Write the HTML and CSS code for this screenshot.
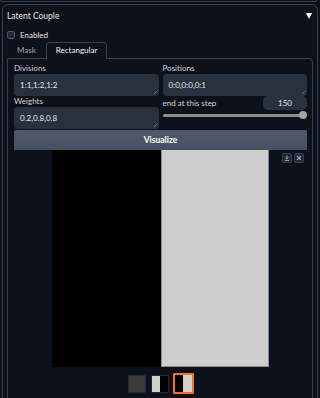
FILE: index.html
```html
<!DOCTYPE html>
<html lang="en">
<head>
  <meta charset="UTF-8" />
  <meta name="viewport" content="width=device-width, initial-scale=1.0" />
  <title>Latent Couple</title>
  <link rel="stylesheet" href="styles.css">
</head>
<body>
  <div class="prev-block"></div>

  <div class="accordion">
    <div class="acc-header">
      <span class="acc-title">Latent Couple</span>
      <span class="acc-arrow"></span>
    </div>

    <label class="enabled-row">
      <span class="checkbox"></span>
      <span>Enabled</span>
    </label>

    <div class="tabs">
      <div class="tab-nav">
        <div class="tab">Mask</div>
        <div class="tab selected">Rectangular</div>
      </div>

      <div class="tab-panel">
        <div class="fields">
          <div class="col">
            <div class="label">Divisions</div>
            <div class="textbox">1:1,1:2,1:2</div>
            <div class="label">Weights</div>
            <div class="textbox">0.2,0.8,0.8</div>
          </div>
          <div class="col">
            <div class="label">Positions</div>
            <div class="textbox">0:0,0:0,0:1</div>
            <div class="slider-head">
              <span class="label">end at this step</span>
              <div class="number">150</div>
            </div>
            <div class="slider">
              <div class="track"></div>
              <div class="thumb"></div>
            </div>
          </div>
        </div>

        <button class="visualize">Visualize</button>

        <div class="gallery">
          <div class="preview">
            <div class="half dark"></div>
            <div class="half light"></div>
          </div>
          <div class="gallery-tools">
            <span class="tool">
              <svg width="6" height="6" viewBox="0 0 6 6"><path d="M3 0.5V3.8M1.6 2.5L3 3.9L4.4 2.5M0.8 5.4H5.2" stroke="#9ca3af" stroke-width="1" fill="none"/></svg>
            </span>
            <span class="tool">
              <svg width="6" height="6" viewBox="0 0 6 6"><path d="M1 1L5 5M5 1L1 5" stroke="#9ca3af" stroke-width="1.1" fill="none"/></svg>
            </span>
          </div>
        </div>

        <div class="thumbs">
          <div class="thumb-item grey"></div>
          <div class="thumb-item">
            <span class="t-light"></span><span class="t-dark"></span>
          </div>
          <div class="thumb-item active">
            <span class="t-dark"></span><span class="t-light"></span>
          </div>
        </div>
      </div>
    </div>
  </div>
</body>
</html>
```

FILE: styles.css
```css
* {
  box-sizing: border-box;
  margin: 0;
  padding: 0;
}

body {
  font-family: Lato, "Open Sans", sans-serif;
  font-size: 8px;
  color: #e5e7eb;
  background-color: #0b0f19;
  height: 398px;
  overflow: hidden;
}

.prev-block {
  height: 2px;
  margin-right: 3px;
  border: 1px solid #374151;
  border-top: none;
  border-radius: 0 0 4px 4px;
}

.accordion {
  margin: 2px 2px 0 2px;
  height: 420px;
  border: 1px solid #374151;
  border-radius: 6px;
  background-color: #0d111b;
}

.acc-header {
  height: 21px;
  display: flex;
  align-items: center;
  justify-content: space-between;
  padding: 0 5px 0 4px;
}

.acc-title {
  font-size: 8.5px;
}

.acc-arrow {
  width: 0;
  height: 0;
  border-left: 3.5px solid transparent;
  border-right: 3.5px solid transparent;
  border-top: 6px solid #ffffff;
}

.enabled-row {
  display: flex;
  align-items: center;
  gap: 5px;
  height: 14px;
  margin-top: 2px;
  padding-left: 4px;
}

.checkbox {
  width: 8px;
  height: 8px;
  border: 1px solid #4b5563;
  border-radius: 2px;
  background-color: #1f2937;
}

.tabs {
  margin: 0 4px;
}

.tab-nav {
  display: flex;
  height: 16px;
}

.tab {
  padding: 0 9px;
  line-height: 15px;
  color: #9ca3af;
  border: 1px solid transparent;
  border-bottom: none;
  border-radius: 4px 4px 0 0;
}

.tab.selected {
  color: #f3f4f6;
  border-color: #374151;
  background-color: #0d111b;
  height: 17px;
  position: relative;
  z-index: 1;
}

.tab-panel {
  height: 360px;
  border: 1px solid #374151;
  border-radius: 0 4px 0 0;
  padding: 4px 5px 0 6px;
}

.fields {
  display: grid;
  grid-template-columns: 1fr 1fr;
  gap: 4px;
  margin-bottom: 1px;
}

.col {
  display: flex;
  flex-direction: column;
}

.label {
  height: 11px;
  line-height: 11px;
  color: #d1d5db;
}

.textbox {
  position: relative;
  height: 22px;
  line-height: 22px;
  padding-left: 6px;
  border-radius: 4px;
  background-color: #2a313e;
  color: #e5e7eb;
}

.textbox::after {
  content: "";
  position: absolute;
  right: 2px;
  bottom: 2px;
  width: 3px;
  height: 3px;
  background: linear-gradient(135deg, transparent 45%, #6b7280 45%, #6b7280 60%, transparent 60%);
}

.slider-head {
  display: flex;
  align-items: center;
  justify-content: space-between;
  height: 14px;
}

.number {
  width: 44px;
  height: 14px;
  line-height: 14px;
  text-align: center;
  border-radius: 5px;
  background-color: #2a313e;
}

.slider {
  position: relative;
  height: 11px;
}

.track {
  position: absolute;
  left: 0;
  right: 2px;
  top: 4px;
  height: 3px;
  border-radius: 2px;
  background-color: #8e8e8e;
}

.thumb {
  position: absolute;
  right: 0;
  top: 1px;
  width: 8px;
  height: 8px;
  border-radius: 50%;
  background-color: #a3a3a3;
}

.visualize {
  display: block;
  width: 100%;
  height: 20px;
  border: none;
  border-radius: 2px 2px 0 0;
  background: linear-gradient(to bottom, #505a6b, #474f60);
  color: #ffffff;
  font-family: Lato, "Open Sans", sans-serif;
  font-size: 8.5px;
  font-weight: bold;
}

.gallery {
  position: relative;
  height: 217px;
  display: flex;
  justify-content: center;
}

.preview {
  width: 217px;
  height: 217px;
  display: flex;
}

.half.dark {
  width: 109px;
  background-color: #000000;
}

.half.light {
  flex: 1;
  background-color: #cecece;
  border: 1px solid #8a8a8a;
  border-top: none;
}

.gallery-tools {
  position: absolute;
  top: 3px;
  right: 3px;
  display: flex;
  gap: 2px;
}

.tool {
  width: 10px;
  height: 10px;
  display: flex;
  align-items: center;
  justify-content: center;
  border: 1px solid #374151;
  border-radius: 2px;
  background-color: #1f2937;
}

.thumbs {
  display: flex;
  justify-content: center;
  align-items: center;
  gap: 5px;
  height: 21px;
  margin-top: 6px;
}

.thumb-item {
  width: 18px;
  height: 18px;
  display: flex;
  border: 1px solid #1f2937;
  border-radius: 1px;
  background-color: #000000;
}

.thumb-item.grey {
  background-color: #3b3b3b;
  border-color: #262a33;
}

.thumb-item.active {
  width: 21px;
  height: 21px;
  margin-left: -1px;
  border: 2px solid #f97316;
}

.t-light,
.t-dark {
  flex: 1;
}

.t-light {
  background-color: #d0d0d0;
}

.t-dark {
  background-color: #000000;
}
```
